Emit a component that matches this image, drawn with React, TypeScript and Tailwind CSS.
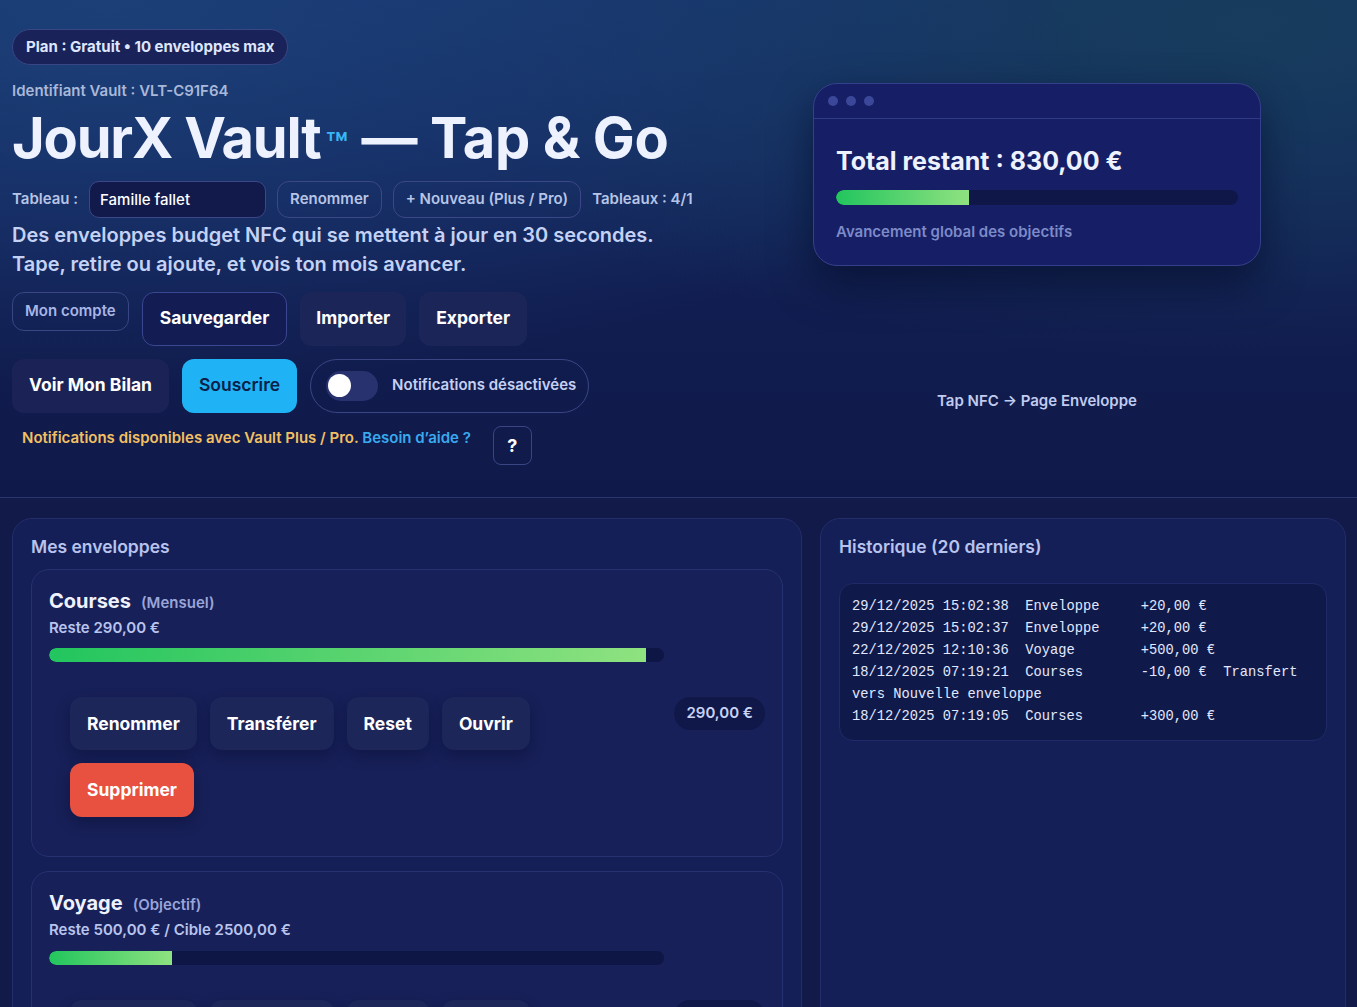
import { useState } from "react";

const sans = "font-['Inter','Noto_Sans',sans-serif]";

const historique = [
  "29/12/2025 15:02:38  Enveloppe     +20,00 €",
  "29/12/2025 15:02:37  Enveloppe     +20,00 €",
  "22/12/2025 12:10:36  Voyage        +500,00 €",
  "18/12/2025 07:19:21  Courses       -10,00 €  Transfert vers Nouvelle enveloppe",
  "18/12/2025 07:19:05  Courses       +300,00 €",
];

const enveloppes = [
  { nom: "Courses", type: "Mensuel", reste: "Reste 290,00 €", pct: 97, montant: "290,00 €" },
  { nom: "Voyage", type: "Objectif", reste: "Reste 500,00 € / Cible 2500,00 €", pct: 20, montant: "500,00 €" },
];

function Barre({ pct, className }: { pct: number; className?: string }) {
  return (
    <div className={`h-[14px] rounded-full bg-[#0d1645] overflow-hidden ${className ?? ""}`}>
      <div
        className="h-full rounded-l-full bg-[linear-gradient(90deg,#22c55e,#8fe280)]"
        style={{ width: `${pct}%` }}
      />
    </div>
  );
}

function CarteEnveloppe({ e }: { e: (typeof enveloppes)[number] }) {
  return (
    <div className="rounded-[18px] border border-[#263171] bg-[#172058] px-[17px] pt-[16px] pb-[39px]">
      <div className="flex items-baseline gap-[10px]">
        <span className="text-[20px] font-bold text-[#eef2ff]">{e.nom}</span>
        <span className="text-[15px] font-semibold text-[#9aa5d8]">({e.type})</span>
      </div>
      <p className="mt-[1px] text-[15px] font-semibold text-[#b9c4ee]">{e.reste}</p>
      <Barre pct={e.pct} className="mt-[9px] w-[615px]" />
      <div className="mt-[35px] flex items-start justify-between">
        <div className="flex w-[500px] flex-wrap gap-[13px] pl-[21px]">
          {["Renommer", "Transférer", "Reset", "Ouvrir"].map((b) => (
            <button
              key={b}
              className="h-[53px] rounded-xl bg-[#1c2659] px-[17px] text-[17.5px] font-bold text-white shadow-[0_6px_14px_rgba(5,10,40,0.35)]"
            >
              {b}
            </button>
          ))}
          <button className="h-[54px] rounded-xl bg-[#e8513f] px-[17px] text-[17.5px] font-bold text-white shadow-[0_6px_14px_rgba(5,10,40,0.35)]">
            Supprimer
          </button>
        </div>
        <span className="rounded-full bg-[#0f1848] px-[12px] py-[5px] text-[15px] font-semibold text-[#c9d3f5]">
          {e.montant}
        </span>
      </div>
    </div>
  );
}

export default function App() {
  const [notif, setNotif] = useState(false);

  return (
    <div className={`${sans} min-h-screen bg-[#111a48] text-white`}>
      {/* EN-TÊTE */}
      <section className="border-b border-[#2a3570] bg-[radial-gradient(ellipse_at_8%_0%,#1c3f78_0%,transparent_55%),radial-gradient(ellipse_at_92%_5%,#173c5c_0%,transparent_50%),linear-gradient(180deg,#15306a_0%,#111d50_60%,#101a4a_100%)] px-3 pt-[29px] pb-[32px]">
        <div className="grid grid-cols-[1fr_616px]">
          <div>
            <span className="inline-flex h-[36px] items-center rounded-full border border-[#3a4584] bg-[#1a2359] px-[13px] text-[15px] font-bold text-[#dfe6ff]">
              Plan : Gratuit • 10 enveloppes max
            </span>
            <p className="mt-[15px] text-[15px] font-semibold text-[#a9b8d8]">Identifiant Vault : VLT-C91F64</p>
            <h1 className="mt-[2px] text-[56px] leading-[66px] font-bold text-[#eef2ff]">
              <span className="tracking-[-1.2px]">JourX Vault</span>
              <span className="ml-[5px] text-[36px] leading-none font-semibold text-[#38b6f5]">™</span>{" "}
              <span className="tracking-[-0.4px]">— Tap &amp; Go</span>
            </h1>
            <div className="mt-[10px] flex items-center gap-[11px]">
              <span className="text-[15px] font-semibold text-[#b7c4e6]">Tableau :</span>
              <input
                defaultValue="Famille fallet"
                className="h-[37px] w-[177px] rounded-[10px] border border-[#3c4788] bg-[#111a4a] px-[10px] text-[15px] font-medium text-white outline-none"
              />
              <button className="h-[37px] rounded-xl border border-[#3c4788] px-[12px] text-[15px] font-semibold text-[#b7c4e6]">
                Renommer
              </button>
              <button className="h-[37px] rounded-xl border border-[#3c4788] px-[12px] text-[15px] font-semibold text-[#b7c4e6]">
                + Nouveau (Plus / Pro)
              </button>
              <span className="text-[15px] font-semibold text-[#b7c4e6]">Tableaux : 4/1</span>
            </div>
            <p className="mt-[3px] text-[20px] leading-[29px] font-semibold text-[#c4d2f5]">
              Des enveloppes budget NFC qui se mettent à jour en 30 secondes.
              <br />
              Tape, retire ou ajoute, et vois ton mois avancer.
            </p>

            <div className="mt-[13px] flex items-start gap-[13px]">
              <button className="h-[39px] rounded-xl border border-[#3a4584] px-[12px] text-[15px] font-semibold text-[#a8b5e6]">
                Mon compte
              </button>
              <button className="h-[54px] rounded-xl border border-[#3a4690] bg-[#131c53] px-[17px] text-[17.5px] font-bold text-white">
                Sauvegarder
              </button>
              <button className="h-[54px] rounded-xl bg-[#1c2558] px-[16px] text-[17.5px] font-bold text-white">
                Importer
              </button>
              <button className="h-[54px] rounded-xl bg-[#1c2558] px-[17px] text-[17.5px] font-bold text-white">
                Exporter
              </button>
            </div>

            <div className="mt-[13px] flex items-center gap-[13px]">
              <button className="h-[54px] rounded-xl bg-[#1b2356] px-[17px] text-[17.5px] font-bold text-white">
                Voir Mon Bilan
              </button>
              <button className="h-[54px] rounded-xl bg-[#1fb3f5] px-[17px] text-[17.5px] font-semibold text-[#0b1f4a]">
                Souscrire
              </button>
              <div className="flex h-[54px] items-center gap-[14px] rounded-full border border-[#3a4584] pr-[12px] pl-[15px]">
                <button
                  onClick={() => setNotif(!notif)}
                  className="flex h-[30px] w-[52px] items-center rounded-full bg-[#28326e] px-[2px]"
                >
                  <span className="h-[23px] w-[23px] rounded-full bg-white" />
                </button>
                <span className="text-[15px] font-semibold text-[#c6d0f2]">Notifications désactivées</span>
              </div>
            </div>

            <div className="mt-[13px] flex items-start gap-[22px] pl-[10px]">
              <p className="pt-[1px] text-[15px] font-semibold text-[#f2c063]">
                Notifications disponibles avec Vault Plus / Pro. <span className="text-[#3aa9ee]">Besoin d’aide ?</span>
              </p>
              <button className="h-[39px] w-[39px] rounded-lg border border-[#3a4584] text-[18px] font-bold text-white">
                ?
              </button>
            </div>
          </div>

          {/* APERÇU */}
          <div className="flex flex-col items-center">
            <div className="mt-[54px] w-[448px] rounded-[24px] border border-[#35408c] bg-[#161f66] shadow-[0_18px_40px_rgba(4,8,35,0.55)]">
              <div className="flex h-[35px] items-center gap-[8px] border-b border-[#2f3a88] pl-[14px]">
                <span className="h-[10px] w-[10px] rounded-full bg-[#3b4799]" />
                <span className="h-[10px] w-[10px] rounded-full bg-[#3b4799]" />
                <span className="h-[10px] w-[10px] rounded-full bg-[#3b4799]" />
              </div>
              <div className="px-[22px] pt-[27px] pb-[21px]">
                <p className="text-[25px] leading-[30px] font-bold text-[#eef2ff]">Total restant : 830,00 €</p>
                <div className="mt-[14px] h-[15px] overflow-hidden rounded-full bg-[#0e1748]">
                  <div className="h-full w-[33%] rounded-l-full bg-[linear-gradient(90deg,#22c55e,#8fe280)]" />
                </div>
                <p className="mt-[16px] text-[15px] font-semibold text-[#7d8ac8]">Avancement global des objectifs</p>
              </div>
            </div>
            <p className="mt-[124px] text-[15px] font-semibold text-[#c0cbef]">Tap NFC → Page Enveloppe</p>
          </div>
        </div>
      </section>

      {/* CONTENU */}
      <section className="grid grid-cols-[790px_1fr] gap-[18px] pt-[20px] pr-[11px] pb-6 pl-3">
        <div className="rounded-[20px] border border-[#232d68] bg-[#151f57] px-[18px] pt-[15px] pb-[19px]">
          <h2 className="text-[17.5px] font-semibold text-[#b8c4ee]">Mes enveloppes</h2>
          <div className="mt-[9px] flex flex-col gap-[14px]">
            {enveloppes.map((e) => (
              <CarteEnveloppe key={e.nom} e={e} />
            ))}
          </div>
        </div>

        <div className="rounded-[20px] border border-[#232d68] bg-[#151f57] px-[18px] pt-[15px] pb-[19px]">
          <h2 className="text-[17.5px] font-semibold text-[#b8c4ee]">Historique (20 derniers)</h2>
          <pre className="mt-[23px] rounded-[14px] border border-[#1f2a66] bg-[#101a4a] px-[12px] py-[12px] font-['Liberation_Mono',monospace] text-[13.75px] leading-[22px] whitespace-pre-wrap text-[#e2e8ff]">
            {historique.join("\n")}
          </pre>
        </div>
      </section>
    </div>
  );
}
